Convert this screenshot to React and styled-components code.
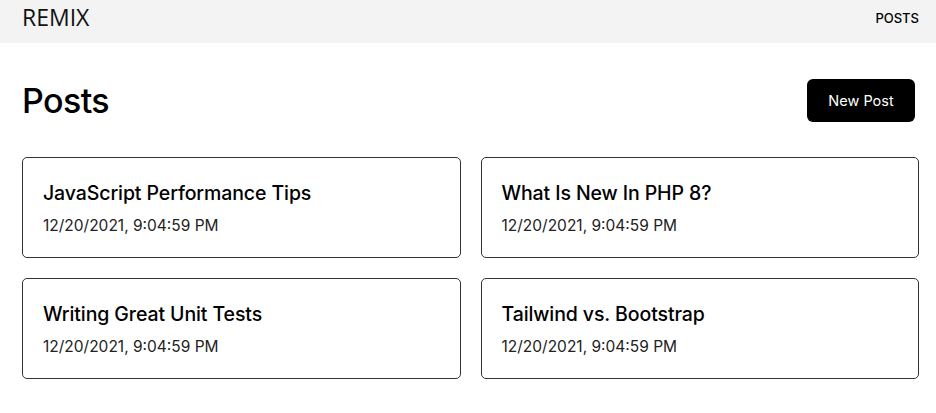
import React from 'react';
import styled, { createGlobalStyle } from 'styled-components';

const GlobalStyle = createGlobalStyle`
  body {
    margin: 0;
    background: #ffffff;
    font-family: "Inter", "Noto Sans", sans-serif;
    color: #000;
  }
`;

const NavBar = styled.header`
  display: flex;
  justify-content: space-between;
  align-items: center;
  height: 43px;
  padding: 0 17px 0 22px;
  background: #f3f3f3;
`;

const Brand = styled.div`
  font-family: "Open Sans", sans-serif;
  font-size: 23px;
  font-weight: 400;
  color: #111;
  margin-top: -9px;
`;

const NavLink = styled.a`
  font-size: 13px;
  font-weight: 500;
  color: #000;
  text-decoration: none;
  margin-top: -8px;
`;

const Main = styled.main`
  padding: 36px 17px 0 22px;
`;

const TitleRow = styled.div`
  display: flex;
  justify-content: space-between;
  align-items: center;
  margin-bottom: 35px;
`;

const PageTitle = styled.h1`
  margin: 0;
  font-size: 34px;
  font-weight: 500;
  letter-spacing: -0.6px;
`;

const NewButton = styled.button`
  background: #000;
  color: #fff;
  border: none;
  border-radius: 6px;
  width: 108px;
  height: 43px;
  margin-right: 4px;
  font-family: inherit;
  font-size: 14.5px;
  font-weight: 400;
  cursor: pointer;
`;

const Grid = styled.div`
  display: grid;
  grid-template-columns: 1fr 1fr;
  gap: 20px;
`;

const Card = styled.article`
  border: 1px solid #333;
  border-radius: 5px;
  height: 101px;
  box-sizing: border-box;
  padding: 23px 20px;
  display: flex;
  flex-direction: column;
  gap: 11px;
`;

const CardTitle = styled.h2`
  margin: 0;
  font-size: 19.5px;
  font-weight: 500;
  letter-spacing: -0.1px;
`;

const CardDate = styled.div`
  font-size: 15.5px;
  font-weight: 400;
  color: #222;
`;

const posts = [
  { id: 1, title: 'JavaScript Performance Tips' },
  { id: 2, title: 'What Is New In PHP 8?' },
  { id: 3, title: 'Writing Great Unit Tests' },
  { id: 4, title: 'Tailwind vs. Bootstrap' },
];

const App = () => {
  return (
    <>
      <GlobalStyle />
      <NavBar>
        <Brand>REMIX</Brand>
        <NavLink href="#">POSTS</NavLink>
      </NavBar>
      <Main>
        <TitleRow>
          <PageTitle>Posts</PageTitle>
          <NewButton>New Post</NewButton>
        </TitleRow>
        <Grid>
          {posts.map(post => (
            <Card key={post.id}>
              <CardTitle>{post.title}</CardTitle>
              <CardDate>12/20/2021, 9:04:59 PM</CardDate>
            </Card>
          ))}
        </Grid>
      </Main>
    </>
  );
};

export default App;
